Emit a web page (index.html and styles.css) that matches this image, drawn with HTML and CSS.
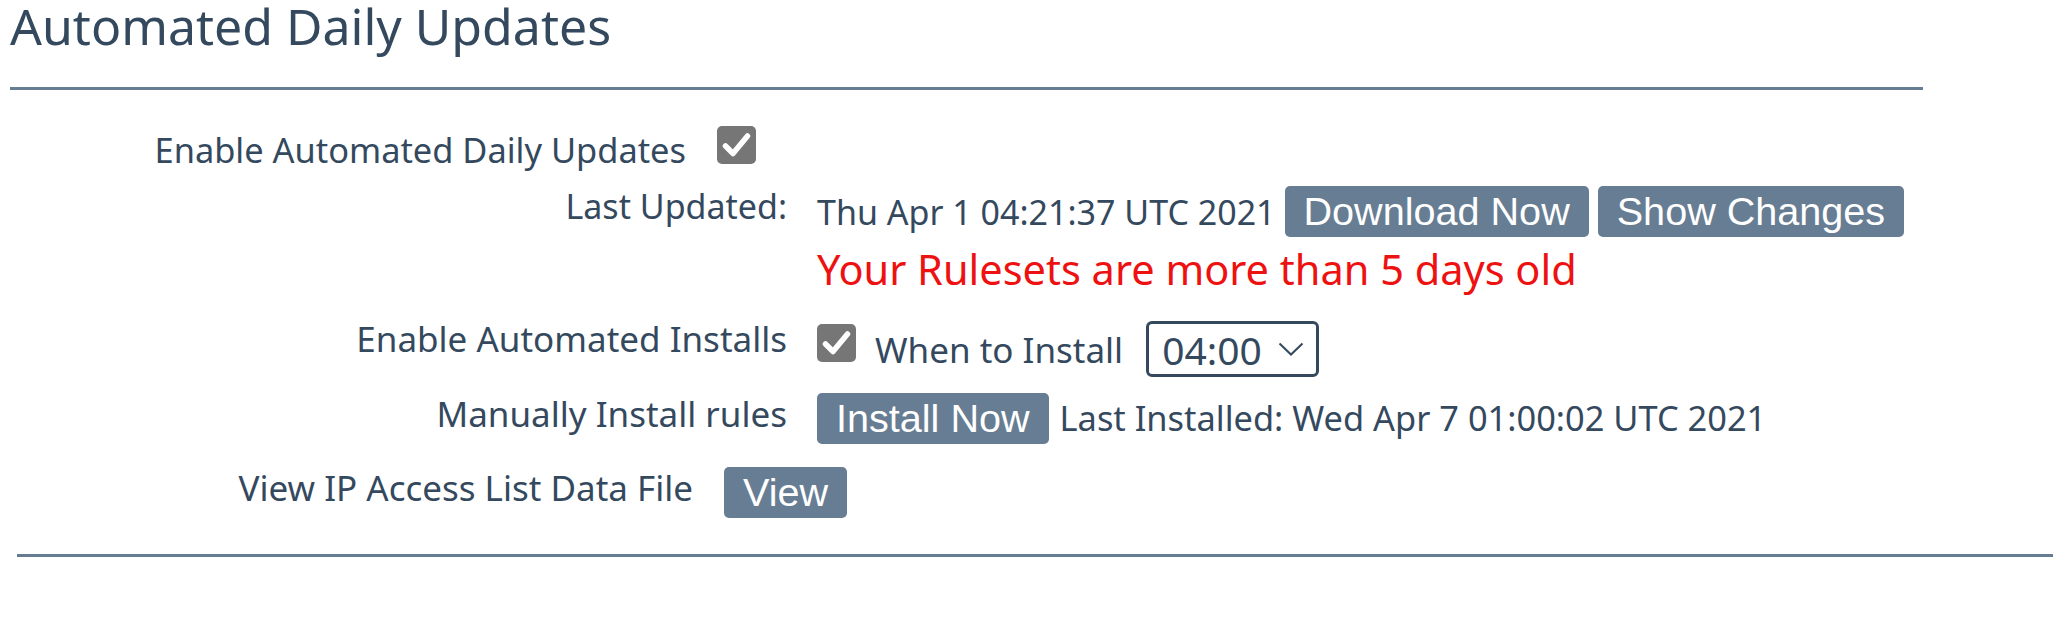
FILE: index.html
```html
<!DOCTYPE html>
<html lang="en">
<head>
<meta charset="utf-8">
<title>Automated Daily Updates</title>
<link rel="stylesheet" href="styles.css">
</head>
<body>
<div class="page">
  <h1 class="title">Automated Daily Updates</h1>
  <div class="rule rule-top"></div>

  <div class="row row-outer row-enable">
    <div class="label">Enable Automated Daily Updates</div>
    <div class="value">
      <span class="check"><svg viewBox="0 0 39 38" width="39" height="38"><path d="M8.5 20 L16 27.5 L30.5 10" fill="none" stroke="#fff" stroke-width="5.5" stroke-linecap="round" stroke-linejoin="round"/></svg></span>
    </div>
  </div>

  <div class="inner">
    <div class="row row-inner row-updated">
      <div class="label">Last Updated:</div>
      <div class="value">
        <div class="line">
          <span class="text date">Thu Apr 1 04:21:37 UTC 2021</span>
          <button class="btn">Download Now</button>
          <button class="btn">Show Changes</button>
        </div>
        <div class="warning">Your Rulesets are more than 5 days old</div>
      </div>
    </div>

    <div class="row row-inner row-installs">
      <div class="label">Enable Automated Installs</div>
      <div class="value line">
        <span class="check check-installs"><svg viewBox="0 0 39 38" width="39" height="38"><path d="M8.5 20 L16 27.5 L30.5 10" fill="none" stroke="#fff" stroke-width="5.5" stroke-linecap="round" stroke-linejoin="round"/></svg></span>
        <span class="text when">When to Install</span>
        <span class="select"><span class="select-text">04:00</span><svg class="chev" viewBox="0 0 26 14" width="26" height="14"><path d="M1.5 1.5 L13 12.5 L24.5 1.5" fill="none" stroke="#34495e" stroke-width="2"/></svg></span>
      </div>
    </div>

    <div class="row row-inner row-manual">
      <div class="label">Manually Install rules</div>
      <div class="value line">
        <button class="btn">Install Now</button>
        <span class="text installed">Last Installed: Wed Apr 7 01:00:02 UTC 2021</span>
      </div>
    </div>
  </div>

  <div class="row row-outer row-view">
    <div class="label">View IP Access List Data File</div>
    <div class="value line">
      <button class="btn">View</button>
    </div>
  </div>

  <div class="rule rule-bottom"></div>
</div>
</body>
</html>
```

FILE: styles.css
```css
html, body {
  margin: 0;
  padding: 0;
  background: #ffffff;
}

.page {
  font-family: "Noto Sans", "Open Sans", sans-serif;
  color: #34495e;
  width: 2053px;
  padding-top: 2px;
}

.title {
  margin: 0;
  padding-left: 10px;
  font-size: 50px;
  font-weight: 400;
  line-height: 48px;
  color: #34495e;
}

.rule {
  border-top: 3px solid #667c92;
  height: 0;
}

.rule-top {
  margin: 37px 0 0 10px;
  width: 1913px;
}

.rule-bottom {
  margin: 36px 0 0 17px;
}

.row {
  display: grid;
  align-items: start;
}

.label {
  font-size: 35px;
  line-height: 46px;
  text-align: right;
  white-space: nowrap;
}

.value {
  font-size: 34px;
  line-height: 46px;
}

.line {
  display: flex;
  align-items: flex-start;
}

.text {
  white-space: nowrap;
}

/* outer rows */
.row-enable {
  grid-template-columns: 686px auto;
  column-gap: 31px;
  margin-top: 36px;
}

.row-enable .label {
  font-size: 34.4px;
  padding-top: 1px;
}

.row-view {
  grid-template-columns: 693px auto;
  column-gap: 31px;
  margin-top: 21px;
}

.row-view .value {
  padding-top: 2px;
}

/* inner rows */
.row-inner {
  grid-template-columns: 787px auto;
  column-gap: 30px;
}

.row-updated {
  margin-top: 10px;
}

.row-updated .label {
  font-size: 34px;
}

.row-updated .line {
  padding-top: 3px;
}

.date {
  margin-top: 3px;
  margin-right: 9px;
}

.row-updated .btn + .btn {
  margin-left: 9px;
}

.warning {
  margin-top: 8px;
  font-size: 41.5px;
  line-height: 48px;
  color: #ee1111;
  white-space: nowrap;
}

.row-installs {
  margin-top: 23px;
}

.row-installs .value {
  padding-top: 5px;
}

.check {
  display: block;
  width: 39px;
  height: 38px;
  background: #767676;
  border-radius: 5px;
  flex: none;
}

.check svg {
  display: block;
}

.check-installs {
  margin-top: 3px;
}

.when {
  font-size: 35px;
  margin: 6px 23px 0 19px;
}

.select {
  display: flex;
  align-items: center;
  box-sizing: border-box;
  width: 173px;
  height: 56px;
  border: 3px solid #34495e;
  border-radius: 6px;
  padding-left: 13px;
  font-size: 39px;
  line-height: 48px;
}

.select-text {
  margin-top: 1px;
}

.chev {
  display: block;
  margin-left: 16px;
}

.row-manual {
  margin-top: 14px;
}

.row-manual .value {
  padding-top: 2px;
}

.installed {
  font-size: 34.4px;
  margin: 2px 0 0 11px;
}

/* buttons */
.btn {
  font-family: "Liberation Sans", Arial, sans-serif;
  font-size: 39.6px;
  line-height: 47px;
  color: #ffffff;
  background: #677d93;
  border: none;
  border-radius: 5px;
  padding: 2px 19px;
  margin: 0;
  white-space: nowrap;
  flex: none;
}
```
